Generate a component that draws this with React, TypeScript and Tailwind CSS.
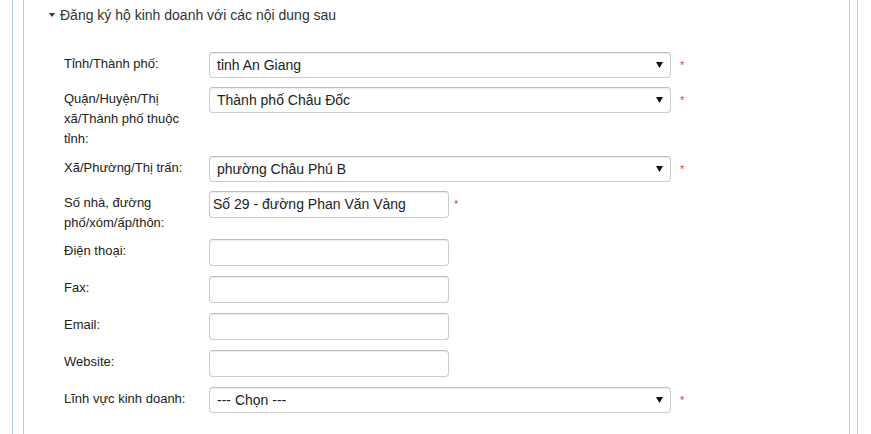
import React from "react";

const Arrow = () => (
  <svg width="7" height="6" viewBox="0 0 7 6" className="shrink-0">
    <polygon points="0,0 7,0 3.5,6" fill="#111" />
  </svg>
);

const Star = ({ ml }: { ml: string }) => (
  <span className={`${ml} mt-[8px] text-[11px] leading-none text-[#f2334b]`}>*</span>
);

const Select = ({ value }: { value: string }) => (
  <div className="flex h-[26px] w-[462px] items-center justify-between rounded-[4px] border border-[#cccccc] border-t-[#b9bdc6] bg-white pl-[7px] pr-[7px] text-[14px] text-[#222] shadow-[inset_0_1px_1px_rgba(0,0,0,0.075)]">
    <span>{value}</span>
    <Arrow />
  </div>
);

const Input = ({ value }: { value?: string }) => (
  <div className="flex h-[27px] w-[240px] items-center rounded-[4px] border border-[#cccccc] border-t-[#b9bdc6] bg-white pl-[3px] text-[14px] text-[#222] shadow-[inset_0_1px_1px_rgba(0,0,0,0.075)]">
    {value}
  </div>
);

const Label = ({ children }: { children: React.ReactNode }) => (
  <div className="mr-[17px] w-[128px] shrink-0 pt-[2px] text-[13px] leading-[20px] text-[#222]">
    {children}
  </div>
);

export default function App() {
  return (
    <div className="h-[434px] w-[871px] overflow-hidden bg-white font-['Liberation_Sans',Arial,sans-serif]">
      <div className="ml-[12px] h-full w-[846px] border-x border-[#a6d0f7]">
        <div className="ml-[10px] h-full w-[827px] border-x border-[#a6d0f7]">
          <div className="flex items-center pl-[25px] pt-[5px] text-[14px] leading-[20px] text-[#333]">
            <svg width="6" height="4" viewBox="0 0 6 4" className="mr-[5px]">
              <polygon points="0,0 6,0 3,4" fill="#333" />
            </svg>
            <span>Đăng ký hộ kinh doanh với các nội dung sau</span>
          </div>

          <div className="mt-[27px] flex flex-col pl-[40px]">
            <div className="flex h-[35px] items-start">
              <Label>Tỉnh/Thành phố:</Label>
              <Select value="tỉnh An Giang" />
              <Star ml="ml-[9px]" />
            </div>
            <div className="flex h-[69px] items-start">
              <Label>Quận/Huyện/Thị xã/Thành phố thuộc tỉnh:</Label>
              <Select value="Thành phố Châu Đốc" />
              <Star ml="ml-[9px]" />
            </div>
            <div className="flex h-[35px] items-start">
              <Label>Xã/Phường/Thị trấn:</Label>
              <Select value="phường Châu Phú B" />
              <Star ml="ml-[9px]" />
            </div>
            <div className="flex h-[48px] items-start">
              <Label>Số nhà, đường phố/xóm/ấp/thôn:</Label>
              <Input value="Số 29 - đường Phan Văn Vàng" />
              <Star ml="ml-[5px]" />
            </div>
            <div className="flex h-[37px] items-start">
              <Label>Điện thoại:</Label>
              <Input />
            </div>
            <div className="flex h-[37px] items-start">
              <Label>Fax:</Label>
              <Input />
            </div>
            <div className="flex h-[37px] items-start">
              <Label>Email:</Label>
              <Input />
            </div>
            <div className="flex h-[37px] items-start">
              <Label>Website:</Label>
              <Input />
            </div>
            <div className="flex h-[35px] items-start">
              <Label>Lĩnh vực kinh doanh:</Label>
              <Select value="--- Chọn ---" />
              <Star ml="ml-[9px]" />
            </div>
          </div>
        </div>
      </div>
    </div>
  );
}
